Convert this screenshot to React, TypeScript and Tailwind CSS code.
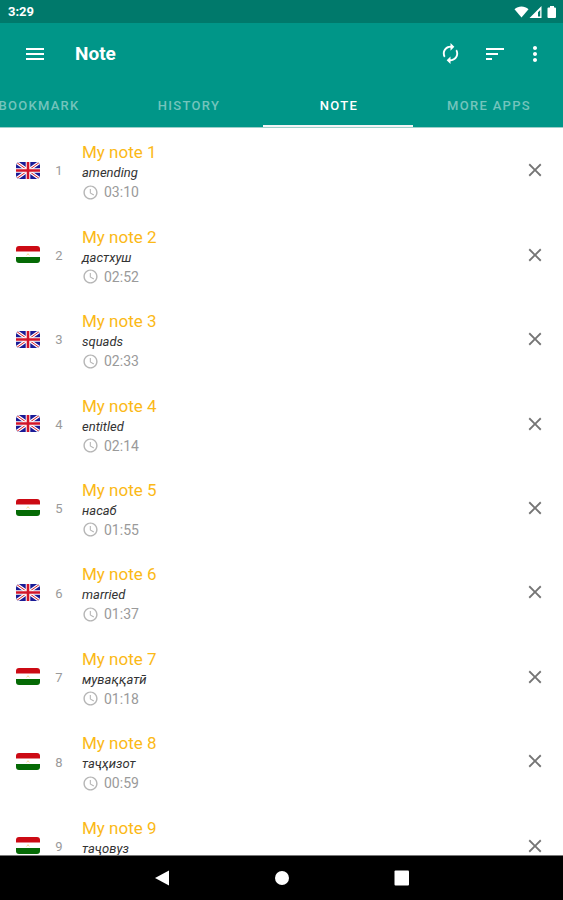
import { MdAccessTime, MdAutorenew, MdClose, MdMenu, MdMoreVert, MdSort } from 'react-icons/md';

type Lang = 'en' | 'tg';

const tabs = ['BOOKMARK', 'HISTORY', 'NOTE', 'MORE APPS'];
const activeTab = 'NOTE';

const notes: { lang: Lang; word: string; time?: string }[] = [
  { lang: 'en', word: 'amending', time: '03:10' },
  { lang: 'tg', word: 'дастхуш', time: '02:52' },
  { lang: 'en', word: 'squads', time: '02:33' },
  { lang: 'en', word: 'entitled', time: '02:14' },
  { lang: 'tg', word: 'насаб', time: '01:55' },
  { lang: 'en', word: 'married', time: '01:37' },
  { lang: 'tg', word: 'муваққатӣ', time: '01:18' },
  { lang: 'tg', word: 'таҷҳизот', time: '00:59' },
  { lang: 'tg', word: 'таҷовуз' },
];

function Flag({ lang }: { lang: Lang }) {
  if (lang === 'en') {
    return (
      <svg viewBox="0 0 24 17" className="h-[17px] w-6 shrink-0 overflow-hidden rounded-[4px]" role="img" aria-label="English">
        <rect width="24" height="17" fill="#1a1a96" />
        <path d="M0 0L24 17M24 0L0 17" stroke="#fff" strokeWidth="3.2" />
        <path d="M0 0L24 17M24 0L0 17" stroke="#d8232f" strokeWidth="1" />
        <path d="M12 0V17M0 8.5H24" stroke="#fff" strokeWidth="4.6" />
        <path d="M12 0V17M0 8.5H24" stroke="#d2142a" strokeWidth="2.6" />
      </svg>
    );
  }
  return (
    <svg viewBox="0 0 24 17" className="h-[17px] w-6 shrink-0 overflow-hidden rounded-[3px]" role="img" aria-label="Tajik">
      <rect width="24" height="17" fill="#fff" />
      <rect width="24" height="5.5" fill="#cc0a14" />
      <rect y="11" width="24" height="6" fill="#056a05" />
      <path d="M10.5 9.5C10.5 8 13.5 8 13.5 9.5M12 7.2V8.2" stroke="#f5d98a" strokeWidth="0.7" fill="none" />
    </svg>
  );
}

function StatusBar() {
  return (
    <div className="flex h-[23px] shrink-0 items-center justify-between bg-[#00796b] pr-[5px] pl-2 text-white">
      <span className="pt-px text-[13px] font-bold">3:29</span>
      <svg viewBox="0 0 44 16" className="h-4 w-11" fill="#fff" aria-hidden="true">
        <path d="M0.5 5.2C4.5 1.6 10.5 1.6 14.5 5.2L7.5 13.5Z" />
        <path d="M27.5 2V14H15.5ZM26.2 6L24 8.2V12.6H26.2Z" fillRule="evenodd" />
        <path d="M33.5 4.5Q33.5 3.5 34.500 3.500H36V2H40V3.500H41Q42 3.500 42 4.500V13Q42 14 41 14H34.500Q33.500 14 33.500 13Z" />
      </svg>
    </div>
  );
}

export default function App() {
  return (
    <div className="flex h-screen flex-col overflow-hidden bg-white font-[Roboto,sans-serif]">
      <StatusBar />

      <header className="shrink-0 bg-[#009688] text-white">
        <div className="flex h-[61px] items-center pr-4 pl-[23px]">
          <button type="button" aria-label="Menu">
            <MdMenu className="size-6" />
          </button>
          <h1 className="ml-7 flex-1 pt-0.5 text-[19px] font-bold">Note</h1>
          <div className="flex items-center">
            <button type="button" aria-label="Sync">
              <MdAutorenew className="size-[23px]" />
            </button>
            <button type="button" aria-label="Sort" className="ml-[21px]">
              <MdSort className="size-6" />
            </button>
            <button type="button" aria-label="More" className="ml-4">
              <MdMoreVert className="size-6" />
            </button>
          </div>
        </div>

        <nav className="flex justify-end overflow-hidden" role="tablist">
          {tabs.map((tab) => (
            <button
              key={tab}
              type="button"
              role="tab"
              aria-selected={tab === activeTab}
              className={`h-[43px] w-[150px] shrink-0 border-b-2 pt-0.5 pl-0.5 text-[13px] font-medium tracking-widest ${
                tab === activeTab ? 'border-gray-100 text-white' : 'border-transparent text-[#74c4bc]'
              }`}
            >
              {tab}
            </button>
          ))}
        </nav>
      </header>

      <main className="flex-1 overflow-hidden border-t border-[#9ccfca]">
        <ul className="grid min-h-[760px] auto-rows-fr">
          {notes.map((note, i) => (
            <li key={note.word} className="flex items-center pr-[17px] pl-4">
              <Flag lang={note.lang} />
              <span className="ml-2 w-[22px] pt-0.5 text-center text-[13px] text-[#9a9a9a]">{i + 1}</span>
              <div className="ml-3 h-[62px] flex-1 pt-0.5">
                <h2 className="text-[17px] leading-[22px] text-[#fbb917]">My note {i + 1}</h2>
                <p className="text-[13px] leading-5 text-[#333] italic">{note.word}</p>
                {note.time && (
                  <p className="flex items-center gap-[5px] text-sm leading-[18px] text-[#9a9a9a]">
                    <MdAccessTime className="size-[17px] text-[#b5b5b5]" />
                    {note.time}
                  </p>
                )}
              </div>
              <button type="button" aria-label={`Delete note ${i + 1}`} className="text-[#757575]">
                <MdClose className="size-[22px]" />
              </button>
            </li>
          ))}
        </ul>
      </main>

      <div className="flex h-[45px] shrink-0 items-center justify-center gap-[104px] border-t border-[#777] bg-black text-white">
        <button type="button" aria-label="Back">
          <svg viewBox="0 0 16 16" className="size-4" fill="currentColor">
            <path d="M15 0.5V15.5L1 8Z" />
          </svg>
        </button>
        <button type="button" aria-label="Home">
          <svg viewBox="0 0 16 16" className="size-4" fill="currentColor">
            <circle cx="8" cy="8" r="7" />
          </svg>
        </button>
        <button type="button" aria-label="Recent apps">
          <svg viewBox="0 0 16 16" className="size-4" fill="currentColor">
            <rect x="0.5" y="0.5" width="14.500" height="15" rx="1" />
          </svg>
        </button>
      </div>
    </div>
  );
}
